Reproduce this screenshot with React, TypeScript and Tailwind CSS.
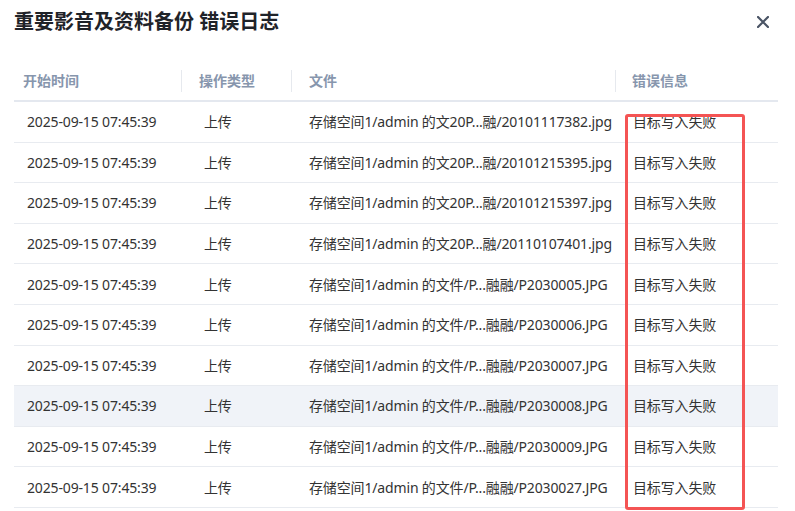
import React from "react";

const files = [
  "存储空间1/admin 的文20P...融/20101117382.jpg",
  "存储空间1/admin 的文20P...融/20101215395.jpg",
  "存储空间1/admin 的文20P...融/20101215397.jpg",
  "存储空间1/admin 的文20P...融/20110107401.jpg",
  "存储空间1/admin 的文件/P...融融/P2030005.JPG",
  "存储空间1/admin 的文件/P...融融/P2030006.JPG",
  "存储空间1/admin 的文件/P...融融/P2030007.JPG",
  "存储空间1/admin 的文件/P...融融/P2030008.JPG",
  "存储空间1/admin 的文件/P...融融/P2030009.JPG",
  "存储空间1/admin 的文件/P...融融/P2030027.JPG",
];

export default function App() {
  return (
    <div
      className="relative w-[795px] h-[511px] overflow-hidden bg-white"
      style={{ fontFamily: '"Noto Sans", "Noto Sans CJK SC", sans-serif' }}
    >
      <div className="flex h-[43px] items-center justify-between pl-[14px] pr-[26px]">
        <h1 className="text-[20px] font-bold leading-none text-[#1f2329]">
          重要影音及资料备份 错误日志
        </h1>
        <svg width="12" height="12" viewBox="0 0 12 12" className="text-[#4a5465]">
          <path d="M1 1 L11 11 M11 1 L1 11" stroke="currentColor" strokeWidth="2.2" strokeLinecap="round" />
        </svg>
      </div>

      <div className="mx-[14px] mt-[18px] w-[764px]">
        <div className="flex h-[41px] items-center border-b-2 border-[#e4e8ef] text-[14px] font-bold text-[#8796ad]">
          <div className="w-[167px] pl-[9px]">开始时间</div>
          <div className="flex w-[110px] items-center">
            <span className="h-[22px] w-px bg-[#e6e9ee]" />
            <span className="pl-[17px]">操作类型</span>
          </div>
          <div className="flex w-[324px] items-center">
            <span className="h-[22px] w-px bg-[#e6e9ee]" />
            <span className="pl-[17px]">文件</span>
          </div>
          <div className="flex w-[163px] items-center">
            <span className="h-[22px] w-px bg-[#e6e9ee]" />
            <span className="pl-[16px]">错误信息</span>
          </div>
        </div>

        {files.map((f, i) => (
          <div
            key={i}
            className={
              "flex h-[40.6px] items-center border-b border-[#e8ebf0] text-[14px] tracking-[-0.15px] text-[#333333] " +
              (i === 7 ? "bg-[#f0f3f8]" : "bg-white")
            }
          >
            <div className="w-[167px] pl-[13px] whitespace-nowrap">2025-09-15 07:45:39</div>
            <div className="w-[110px] pl-[23px]">上传</div>
            <div className="w-[324px] pl-[18px] whitespace-nowrap">{f}</div>
            <div className="w-[163px] pl-[18px]">目标写入失败</div>
          </div>
        ))}
      </div>

      <div className="pointer-events-none absolute left-[625px] top-[114px] h-[396px] w-[120px] rounded-[3px] border-[3px] border-[#f45454]" />
    </div>
  );
}
